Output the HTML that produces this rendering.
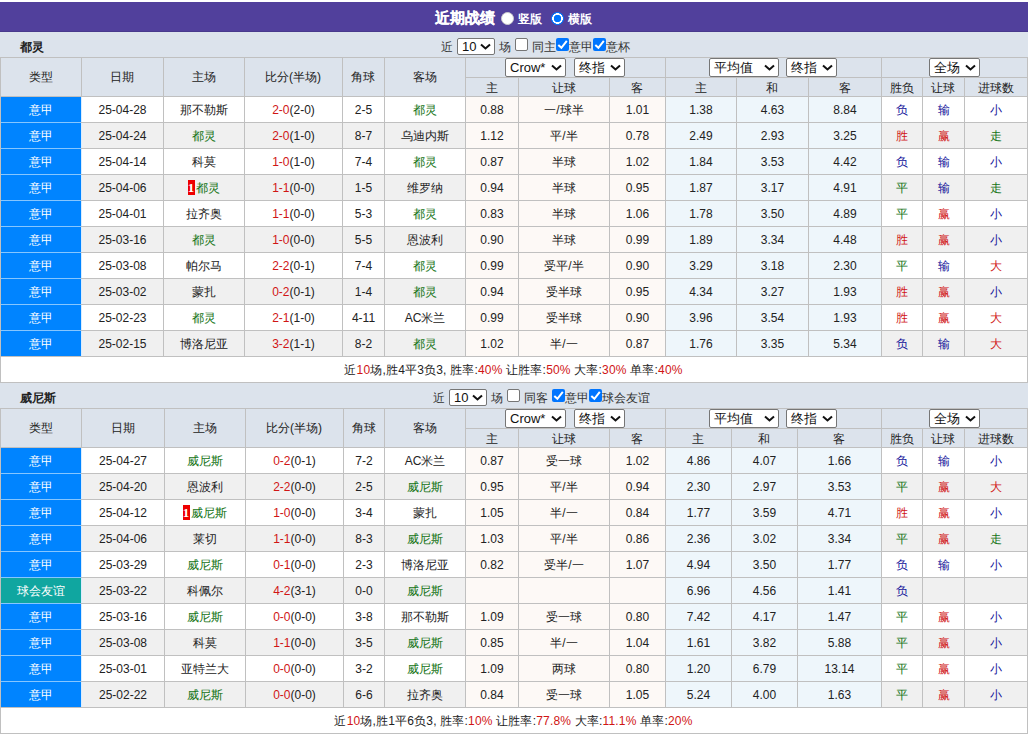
<!DOCTYPE html><html><head><meta charset="utf-8"><style>
html,body{margin:0;padding:0;background:#fff;}
body{width:1029px;height:735px;overflow:hidden;position:relative;font-family:"Liberation Sans", sans-serif;font-size:12px;color:#222;}
.a{position:absolute;}
.t{text-align:center;white-space:nowrap;}
.ct{white-space:nowrap;color:#333;}
.sel{background:#fff;border:1px solid #767676;border-radius:2px;}
.st{white-space:nowrap;font-size:13px;color:#111;}
.cbx{width:11px;height:11px;border:1px solid #767676;border-radius:2px;background:#fff;}
.cbx.on{width:13px;height:13px;border:none;background:#0075ff;}
.bar{left:0;top:2px;width:1028px;height:29px;background:#51409c;border-bottom:1px solid #48398c;}
.radio{width:11px;height:11px;border-radius:50%;background:#fff;border:1px solid #ccc;}
.radio.on{width:13px;height:13px;border:none;background:radial-gradient(circle at center,#0075ff 0,#0075ff 3.5px,#fff 3.9px,#fff 5.1px,#0075ff 5.5px);}
.rf{display:inline-block;background:#e00;color:#fff;font-weight:bold;width:7px;height:15px;line-height:15px;vertical-align:middle;margin-top:-3px;margin-left:-1px;margin-right:1px;font-family:"Liberation Serif",serif;font-size:13px}
</style></head><body>
<div class="a bar"></div>
<div class="a" style="left:0;top:32px;width:1028px;height:1px;background:#e6e6fc"></div>
<div class="a" style="left:435px;top:3px;height:29px;line-height:29px;color:#fff;font-weight:bold;font-size:15px;-webkit-text-stroke:0.2px #fff">近期战绩</div>
<div class="a radio" style="left:501px;top:12px"></div>
<div class="a" style="left:518px;top:5px;height:29px;line-height:29px;color:#fff;font-size:12px;font-weight:bold">竖版</div>
<div class="a radio on" style="left:551px;top:12px"></div>
<div class="a" style="left:568px;top:5px;height:29px;line-height:29px;color:#fff;font-size:12px;font-weight:bold">横版</div>
<div class="a" style="left:0px;top:32px;width:1028px;height:25px;background:#dce3ec;"></div>
<div class="a t" style="left:20px;top:35px;width:100px;height:25px;line-height:25px;text-align:left;font-weight:bold;color:#222">都灵</div>
<div class="a ct" style="left:441px;top:35px;height:25px;line-height:25px;">近</div>
<div class="a sel" style="left:457px;top:38px;width:36px;height:15px;"></div>
<div class="a st" style="left:462px;top:38px;height:17px;line-height:17px;">10</div>
<svg class="a" style="left:480px;top:43px" width="11" height="8" viewBox="0 0 11 8"><path d="M1 1.5 L5.5 5.5 L10 1.5" fill="none" stroke="#111" stroke-width="2"/></svg>
<div class="a ct" style="left:499px;top:35px;height:25px;line-height:25px;">场</div>
<div class="a cbx" style="left:515px;top:38px;"></div>
<div class="a ct" style="left:532px;top:35px;height:25px;line-height:25px;">同主</div>
<div class="a cbx on" style="left:556px;top:38px;"></div>
<svg class="a" style="left:556px;top:38px" width="13" height="13" viewBox="0 0 13 13"><path d="M2.3 6.9 L5.4 9.8 L10.8 2.8" fill="none" stroke="#fff" stroke-width="2"/></svg>
<div class="a ct" style="left:569px;top:35px;height:25px;line-height:25px;">意甲</div>
<div class="a cbx on" style="left:593px;top:38px;"></div>
<svg class="a" style="left:593px;top:38px" width="13" height="13" viewBox="0 0 13 13"><path d="M2.3 6.9 L5.4 9.8 L10.8 2.8" fill="none" stroke="#fff" stroke-width="2"/></svg>
<div class="a ct" style="left:606px;top:35px;height:25px;line-height:25px;">意杯</div>
<div class="a" style="left:0px;top:57px;width:1028px;height:39px;background:#dce3ec;"></div>
<div class="a" style="left:0px;top:96px;width:81px;height:26px;background:#0084ff;"></div>
<div class="a" style="left:81px;top:96px;width:384px;height:26px;background:#fff;"></div>
<div class="a" style="left:465px;top:96px;width:200px;height:26px;background:#fdf9f6;"></div>
<div class="a" style="left:665px;top:96px;width:216px;height:26px;background:#eef6fb;"></div>
<div class="a" style="left:881px;top:96px;width:146px;height:26px;background:#fff;"></div>
<div class="a" style="left:0px;top:122px;width:81px;height:26px;background:#0084ff;"></div>
<div class="a" style="left:81px;top:122px;width:384px;height:26px;background:#f0f0f0;"></div>
<div class="a" style="left:465px;top:122px;width:200px;height:26px;background:#fdf9f6;"></div>
<div class="a" style="left:665px;top:122px;width:216px;height:26px;background:#eef6fb;"></div>
<div class="a" style="left:881px;top:122px;width:146px;height:26px;background:#f0f0f0;"></div>
<div class="a" style="left:0px;top:148px;width:81px;height:26px;background:#0084ff;"></div>
<div class="a" style="left:81px;top:148px;width:384px;height:26px;background:#fff;"></div>
<div class="a" style="left:465px;top:148px;width:200px;height:26px;background:#fdf9f6;"></div>
<div class="a" style="left:665px;top:148px;width:216px;height:26px;background:#eef6fb;"></div>
<div class="a" style="left:881px;top:148px;width:146px;height:26px;background:#fff;"></div>
<div class="a" style="left:0px;top:174px;width:81px;height:26px;background:#0084ff;"></div>
<div class="a" style="left:81px;top:174px;width:384px;height:26px;background:#f0f0f0;"></div>
<div class="a" style="left:465px;top:174px;width:200px;height:26px;background:#fdf9f6;"></div>
<div class="a" style="left:665px;top:174px;width:216px;height:26px;background:#eef6fb;"></div>
<div class="a" style="left:881px;top:174px;width:146px;height:26px;background:#f0f0f0;"></div>
<div class="a" style="left:0px;top:200px;width:81px;height:26px;background:#0084ff;"></div>
<div class="a" style="left:81px;top:200px;width:384px;height:26px;background:#fff;"></div>
<div class="a" style="left:465px;top:200px;width:200px;height:26px;background:#fdf9f6;"></div>
<div class="a" style="left:665px;top:200px;width:216px;height:26px;background:#eef6fb;"></div>
<div class="a" style="left:881px;top:200px;width:146px;height:26px;background:#fff;"></div>
<div class="a" style="left:0px;top:226px;width:81px;height:26px;background:#0084ff;"></div>
<div class="a" style="left:81px;top:226px;width:384px;height:26px;background:#f0f0f0;"></div>
<div class="a" style="left:465px;top:226px;width:200px;height:26px;background:#fdf9f6;"></div>
<div class="a" style="left:665px;top:226px;width:216px;height:26px;background:#eef6fb;"></div>
<div class="a" style="left:881px;top:226px;width:146px;height:26px;background:#f0f0f0;"></div>
<div class="a" style="left:0px;top:252px;width:81px;height:26px;background:#0084ff;"></div>
<div class="a" style="left:81px;top:252px;width:384px;height:26px;background:#fff;"></div>
<div class="a" style="left:465px;top:252px;width:200px;height:26px;background:#fdf9f6;"></div>
<div class="a" style="left:665px;top:252px;width:216px;height:26px;background:#eef6fb;"></div>
<div class="a" style="left:881px;top:252px;width:146px;height:26px;background:#fff;"></div>
<div class="a" style="left:0px;top:278px;width:81px;height:26px;background:#0084ff;"></div>
<div class="a" style="left:81px;top:278px;width:384px;height:26px;background:#f0f0f0;"></div>
<div class="a" style="left:465px;top:278px;width:200px;height:26px;background:#fdf9f6;"></div>
<div class="a" style="left:665px;top:278px;width:216px;height:26px;background:#eef6fb;"></div>
<div class="a" style="left:881px;top:278px;width:146px;height:26px;background:#f0f0f0;"></div>
<div class="a" style="left:0px;top:304px;width:81px;height:26px;background:#0084ff;"></div>
<div class="a" style="left:81px;top:304px;width:384px;height:26px;background:#fff;"></div>
<div class="a" style="left:465px;top:304px;width:200px;height:26px;background:#fdf9f6;"></div>
<div class="a" style="left:665px;top:304px;width:216px;height:26px;background:#eef6fb;"></div>
<div class="a" style="left:881px;top:304px;width:146px;height:26px;background:#fff;"></div>
<div class="a" style="left:0px;top:330px;width:81px;height:26px;background:#0084ff;"></div>
<div class="a" style="left:81px;top:330px;width:384px;height:26px;background:#f0f0f0;"></div>
<div class="a" style="left:465px;top:330px;width:200px;height:26px;background:#fdf9f6;"></div>
<div class="a" style="left:665px;top:330px;width:216px;height:26px;background:#eef6fb;"></div>
<div class="a" style="left:881px;top:330px;width:146px;height:26px;background:#f0f0f0;"></div>
<div class="a" style="left:0px;top:356px;width:1028px;height:26px;background:#fff;"></div>
<div class="a" style="left:0px;top:57px;width:1028px;height:1px;background:#c0c0c0;"></div>
<div class="a" style="left:465px;top:77px;width:562px;height:1px;background:#c0c0c0;"></div>
<div class="a" style="left:0px;top:96px;width:1028px;height:1px;background:#c0c0c0;"></div>
<div class="a" style="left:0px;top:122px;width:1028px;height:1px;background:#c0c0c0;"></div>
<div class="a" style="left:0px;top:148px;width:1028px;height:1px;background:#c0c0c0;"></div>
<div class="a" style="left:0px;top:174px;width:1028px;height:1px;background:#c0c0c0;"></div>
<div class="a" style="left:0px;top:200px;width:1028px;height:1px;background:#c0c0c0;"></div>
<div class="a" style="left:0px;top:226px;width:1028px;height:1px;background:#c0c0c0;"></div>
<div class="a" style="left:0px;top:252px;width:1028px;height:1px;background:#c0c0c0;"></div>
<div class="a" style="left:0px;top:278px;width:1028px;height:1px;background:#c0c0c0;"></div>
<div class="a" style="left:0px;top:304px;width:1028px;height:1px;background:#c0c0c0;"></div>
<div class="a" style="left:0px;top:330px;width:1028px;height:1px;background:#c0c0c0;"></div>
<div class="a" style="left:0px;top:356px;width:1028px;height:1px;background:#c0c0c0;"></div>
<div class="a" style="left:0px;top:382px;width:1028px;height:1px;background:#c0c0c0;"></div>
<div class="a" style="left:0px;top:57px;width:1px;height:326px;background:#c0c0c0;"></div>
<div class="a" style="left:81px;top:57px;width:1px;height:300px;background:#c0c0c0;"></div>
<div class="a" style="left:163px;top:57px;width:1px;height:300px;background:#c0c0c0;"></div>
<div class="a" style="left:244px;top:57px;width:1px;height:300px;background:#c0c0c0;"></div>
<div class="a" style="left:342px;top:57px;width:1px;height:300px;background:#c0c0c0;"></div>
<div class="a" style="left:384px;top:57px;width:1px;height:300px;background:#c0c0c0;"></div>
<div class="a" style="left:465px;top:57px;width:1px;height:300px;background:#c0c0c0;"></div>
<div class="a" style="left:518px;top:77px;width:1px;height:280px;background:#c0c0c0;"></div>
<div class="a" style="left:609px;top:77px;width:1px;height:280px;background:#c0c0c0;"></div>
<div class="a" style="left:665px;top:57px;width:1px;height:300px;background:#c0c0c0;"></div>
<div class="a" style="left:736px;top:77px;width:1px;height:280px;background:#c0c0c0;"></div>
<div class="a" style="left:808px;top:77px;width:1px;height:280px;background:#c0c0c0;"></div>
<div class="a" style="left:881px;top:57px;width:1px;height:300px;background:#c0c0c0;"></div>
<div class="a" style="left:922px;top:77px;width:1px;height:280px;background:#c0c0c0;"></div>
<div class="a" style="left:964px;top:77px;width:1px;height:280px;background:#c0c0c0;"></div>
<div class="a" style="left:1027px;top:57px;width:1px;height:326px;background:#c0c0c0;"></div>
<div class="a" style="left:1px;top:122px;width:80px;height:1px;background:#86c6ff;"></div>
<div class="a" style="left:1px;top:148px;width:80px;height:1px;background:#86c6ff;"></div>
<div class="a" style="left:1px;top:174px;width:80px;height:1px;background:#86c6ff;"></div>
<div class="a" style="left:1px;top:200px;width:80px;height:1px;background:#86c6ff;"></div>
<div class="a" style="left:1px;top:226px;width:80px;height:1px;background:#86c6ff;"></div>
<div class="a" style="left:1px;top:252px;width:80px;height:1px;background:#86c6ff;"></div>
<div class="a" style="left:1px;top:278px;width:80px;height:1px;background:#86c6ff;"></div>
<div class="a" style="left:1px;top:304px;width:80px;height:1px;background:#86c6ff;"></div>
<div class="a" style="left:1px;top:330px;width:80px;height:1px;background:#86c6ff;"></div>
<div class="a" style="left:81px;top:97px;width:1px;height:25px;background:#d9ecff;"></div>
<div class="a" style="left:81px;top:123px;width:1px;height:25px;background:#d9ecff;"></div>
<div class="a" style="left:81px;top:149px;width:1px;height:25px;background:#d9ecff;"></div>
<div class="a" style="left:81px;top:175px;width:1px;height:25px;background:#d9ecff;"></div>
<div class="a" style="left:81px;top:201px;width:1px;height:25px;background:#d9ecff;"></div>
<div class="a" style="left:81px;top:227px;width:1px;height:25px;background:#d9ecff;"></div>
<div class="a" style="left:81px;top:253px;width:1px;height:25px;background:#d9ecff;"></div>
<div class="a" style="left:81px;top:279px;width:1px;height:25px;background:#d9ecff;"></div>
<div class="a" style="left:81px;top:305px;width:1px;height:25px;background:#d9ecff;"></div>
<div class="a" style="left:81px;top:331px;width:1px;height:25px;background:#d9ecff;"></div>
<div class="a t" style="left:0px;top:58px;width:81px;height:39px;line-height:39px;color:#222">类型</div>
<div class="a t" style="left:81px;top:58px;width:82px;height:39px;line-height:39px;color:#222">日期</div>
<div class="a t" style="left:163px;top:58px;width:81px;height:39px;line-height:39px;color:#222">主场</div>
<div class="a t" style="left:244px;top:58px;width:98px;height:39px;line-height:39px;color:#222">比分(半场)</div>
<div class="a t" style="left:342px;top:58px;width:42px;height:39px;line-height:39px;color:#222">角球</div>
<div class="a t" style="left:384px;top:58px;width:81px;height:39px;line-height:39px;color:#222">客场</div>
<div class="a t" style="left:465px;top:79px;width:53px;height:19px;line-height:19px;color:#222">主</div>
<div class="a t" style="left:518px;top:79px;width:91px;height:19px;line-height:19px;color:#222">让球</div>
<div class="a t" style="left:609px;top:79px;width:56px;height:19px;line-height:19px;color:#222">客</div>
<div class="a t" style="left:665px;top:79px;width:71px;height:19px;line-height:19px;color:#222">主</div>
<div class="a t" style="left:736px;top:79px;width:72px;height:19px;line-height:19px;color:#222">和</div>
<div class="a t" style="left:808px;top:79px;width:73px;height:19px;line-height:19px;color:#222">客</div>
<div class="a t" style="left:881px;top:79px;width:41px;height:19px;line-height:19px;color:#222">胜负</div>
<div class="a t" style="left:922px;top:79px;width:42px;height:19px;line-height:19px;color:#222">让球</div>
<div class="a t" style="left:964px;top:79px;width:63px;height:19px;line-height:19px;color:#222">进球数</div>
<div class="a sel" style="left:505px;top:58px;width:59px;height:17px;"></div>
<div class="a st" style="left:510px;top:58px;height:19px;line-height:19px;">Crow*</div>
<svg class="a" style="left:551px;top:64px" width="11" height="8" viewBox="0 0 11 8"><path d="M1 1.5 L5.5 5.5 L10 1.5" fill="none" stroke="#111" stroke-width="2"/></svg>
<div class="a sel" style="left:574px;top:58px;width:49px;height:17px;"></div>
<div class="a st" style="left:579px;top:58px;height:19px;line-height:19px;">终指</div>
<svg class="a" style="left:610px;top:64px" width="11" height="8" viewBox="0 0 11 8"><path d="M1 1.5 L5.5 5.5 L10 1.5" fill="none" stroke="#111" stroke-width="2"/></svg>
<div class="a sel" style="left:709px;top:58px;width:68px;height:17px;"></div>
<div class="a st" style="left:714px;top:58px;height:19px;line-height:19px;">平均值</div>
<svg class="a" style="left:764px;top:64px" width="11" height="8" viewBox="0 0 11 8"><path d="M1 1.5 L5.5 5.5 L10 1.5" fill="none" stroke="#111" stroke-width="2"/></svg>
<div class="a sel" style="left:786px;top:58px;width:49px;height:17px;"></div>
<div class="a st" style="left:791px;top:58px;height:19px;line-height:19px;">终指</div>
<svg class="a" style="left:822px;top:64px" width="11" height="8" viewBox="0 0 11 8"><path d="M1 1.5 L5.5 5.5 L10 1.5" fill="none" stroke="#111" stroke-width="2"/></svg>
<div class="a sel" style="left:929px;top:58px;width:49px;height:17px;"></div>
<div class="a st" style="left:934px;top:58px;height:19px;line-height:19px;">全场</div>
<svg class="a" style="left:965px;top:64px" width="11" height="8" viewBox="0 0 11 8"><path d="M1 1.5 L5.5 5.5 L10 1.5" fill="none" stroke="#111" stroke-width="2"/></svg>
<div class="a t" style="left:1px;top:98px;width:80px;height:25px;line-height:25px;color:#fff">意甲</div>
<div class="a t" style="left:82px;top:98px;width:81px;height:25px;line-height:25px;color:#222">25-04-28</div>
<div class="a t" style="left:164px;top:98px;width:80px;height:25px;line-height:25px;color:#222">那不勒斯</div>
<div class="a t" style="left:245px;top:98px;width:97px;height:25px;line-height:25px;color:#222"><span style="color:#d01515">2-0</span>(2-0)</div>
<div class="a t" style="left:343px;top:98px;width:41px;height:25px;line-height:25px;color:#222">2-5</div>
<div class="a t" style="left:385px;top:98px;width:80px;height:25px;line-height:25px;color:#222"><span style="color:#137313">都灵</span></div>
<div class="a t" style="left:466px;top:98px;width:52px;height:25px;line-height:25px;color:#222">0.88</div>
<div class="a t" style="left:519px;top:98px;width:90px;height:25px;line-height:25px;color:#222">一/球半</div>
<div class="a t" style="left:610px;top:98px;width:55px;height:25px;line-height:25px;color:#222">1.01</div>
<div class="a t" style="left:666px;top:98px;width:70px;height:25px;line-height:25px;color:#222">1.38</div>
<div class="a t" style="left:737px;top:98px;width:71px;height:25px;line-height:25px;color:#222">4.63</div>
<div class="a t" style="left:809px;top:98px;width:72px;height:25px;line-height:25px;color:#222">8.84</div>
<div class="a t" style="left:882px;top:98px;width:40px;height:25px;line-height:25px;color:#222"><span style="color:#12129a">负</span></div>
<div class="a t" style="left:923px;top:98px;width:41px;height:25px;line-height:25px;color:#222"><span style="color:#12129a">输</span></div>
<div class="a t" style="left:965px;top:98px;width:62px;height:25px;line-height:25px;color:#222"><span style="color:#12129a">小</span></div>
<div class="a t" style="left:1px;top:124px;width:80px;height:25px;line-height:25px;color:#fff">意甲</div>
<div class="a t" style="left:82px;top:124px;width:81px;height:25px;line-height:25px;color:#222">25-04-24</div>
<div class="a t" style="left:164px;top:124px;width:80px;height:25px;line-height:25px;color:#222"><span style="color:#137313">都灵</span></div>
<div class="a t" style="left:245px;top:124px;width:97px;height:25px;line-height:25px;color:#222"><span style="color:#d01515">2-0</span>(1-0)</div>
<div class="a t" style="left:343px;top:124px;width:41px;height:25px;line-height:25px;color:#222">8-7</div>
<div class="a t" style="left:385px;top:124px;width:80px;height:25px;line-height:25px;color:#222">乌迪内斯</div>
<div class="a t" style="left:466px;top:124px;width:52px;height:25px;line-height:25px;color:#222">1.12</div>
<div class="a t" style="left:519px;top:124px;width:90px;height:25px;line-height:25px;color:#222">平/半</div>
<div class="a t" style="left:610px;top:124px;width:55px;height:25px;line-height:25px;color:#222">0.78</div>
<div class="a t" style="left:666px;top:124px;width:70px;height:25px;line-height:25px;color:#222">2.49</div>
<div class="a t" style="left:737px;top:124px;width:71px;height:25px;line-height:25px;color:#222">2.93</div>
<div class="a t" style="left:809px;top:124px;width:72px;height:25px;line-height:25px;color:#222">3.25</div>
<div class="a t" style="left:882px;top:124px;width:40px;height:25px;line-height:25px;color:#222"><span style="color:#d01515">胜</span></div>
<div class="a t" style="left:923px;top:124px;width:41px;height:25px;line-height:25px;color:#222"><span style="color:#d01515">赢</span></div>
<div class="a t" style="left:965px;top:124px;width:62px;height:25px;line-height:25px;color:#222"><span style="color:#137313">走</span></div>
<div class="a t" style="left:1px;top:150px;width:80px;height:25px;line-height:25px;color:#fff">意甲</div>
<div class="a t" style="left:82px;top:150px;width:81px;height:25px;line-height:25px;color:#222">25-04-14</div>
<div class="a t" style="left:164px;top:150px;width:80px;height:25px;line-height:25px;color:#222">科莫</div>
<div class="a t" style="left:245px;top:150px;width:97px;height:25px;line-height:25px;color:#222"><span style="color:#d01515">1-0</span>(1-0)</div>
<div class="a t" style="left:343px;top:150px;width:41px;height:25px;line-height:25px;color:#222">7-4</div>
<div class="a t" style="left:385px;top:150px;width:80px;height:25px;line-height:25px;color:#222"><span style="color:#137313">都灵</span></div>
<div class="a t" style="left:466px;top:150px;width:52px;height:25px;line-height:25px;color:#222">0.87</div>
<div class="a t" style="left:519px;top:150px;width:90px;height:25px;line-height:25px;color:#222">半球</div>
<div class="a t" style="left:610px;top:150px;width:55px;height:25px;line-height:25px;color:#222">1.02</div>
<div class="a t" style="left:666px;top:150px;width:70px;height:25px;line-height:25px;color:#222">1.84</div>
<div class="a t" style="left:737px;top:150px;width:71px;height:25px;line-height:25px;color:#222">3.53</div>
<div class="a t" style="left:809px;top:150px;width:72px;height:25px;line-height:25px;color:#222">4.42</div>
<div class="a t" style="left:882px;top:150px;width:40px;height:25px;line-height:25px;color:#222"><span style="color:#12129a">负</span></div>
<div class="a t" style="left:923px;top:150px;width:41px;height:25px;line-height:25px;color:#222"><span style="color:#12129a">输</span></div>
<div class="a t" style="left:965px;top:150px;width:62px;height:25px;line-height:25px;color:#222"><span style="color:#12129a">小</span></div>
<div class="a t" style="left:1px;top:176px;width:80px;height:25px;line-height:25px;color:#fff">意甲</div>
<div class="a t" style="left:82px;top:176px;width:81px;height:25px;line-height:25px;color:#222">25-04-06</div>
<div class="a t" style="left:164px;top:176px;width:80px;height:25px;line-height:25px;color:#222"><span class="rf">1</span><span style="color:#137313">都灵</span></div>
<div class="a t" style="left:245px;top:176px;width:97px;height:25px;line-height:25px;color:#222"><span style="color:#d01515">1-1</span>(0-0)</div>
<div class="a t" style="left:343px;top:176px;width:41px;height:25px;line-height:25px;color:#222">1-5</div>
<div class="a t" style="left:385px;top:176px;width:80px;height:25px;line-height:25px;color:#222">维罗纳</div>
<div class="a t" style="left:466px;top:176px;width:52px;height:25px;line-height:25px;color:#222">0.94</div>
<div class="a t" style="left:519px;top:176px;width:90px;height:25px;line-height:25px;color:#222">半球</div>
<div class="a t" style="left:610px;top:176px;width:55px;height:25px;line-height:25px;color:#222">0.95</div>
<div class="a t" style="left:666px;top:176px;width:70px;height:25px;line-height:25px;color:#222">1.87</div>
<div class="a t" style="left:737px;top:176px;width:71px;height:25px;line-height:25px;color:#222">3.17</div>
<div class="a t" style="left:809px;top:176px;width:72px;height:25px;line-height:25px;color:#222">4.91</div>
<div class="a t" style="left:882px;top:176px;width:40px;height:25px;line-height:25px;color:#222"><span style="color:#137313">平</span></div>
<div class="a t" style="left:923px;top:176px;width:41px;height:25px;line-height:25px;color:#222"><span style="color:#12129a">输</span></div>
<div class="a t" style="left:965px;top:176px;width:62px;height:25px;line-height:25px;color:#222"><span style="color:#137313">走</span></div>
<div class="a t" style="left:1px;top:202px;width:80px;height:25px;line-height:25px;color:#fff">意甲</div>
<div class="a t" style="left:82px;top:202px;width:81px;height:25px;line-height:25px;color:#222">25-04-01</div>
<div class="a t" style="left:164px;top:202px;width:80px;height:25px;line-height:25px;color:#222">拉齐奥</div>
<div class="a t" style="left:245px;top:202px;width:97px;height:25px;line-height:25px;color:#222"><span style="color:#d01515">1-1</span>(0-0)</div>
<div class="a t" style="left:343px;top:202px;width:41px;height:25px;line-height:25px;color:#222">5-3</div>
<div class="a t" style="left:385px;top:202px;width:80px;height:25px;line-height:25px;color:#222"><span style="color:#137313">都灵</span></div>
<div class="a t" style="left:466px;top:202px;width:52px;height:25px;line-height:25px;color:#222">0.83</div>
<div class="a t" style="left:519px;top:202px;width:90px;height:25px;line-height:25px;color:#222">半球</div>
<div class="a t" style="left:610px;top:202px;width:55px;height:25px;line-height:25px;color:#222">1.06</div>
<div class="a t" style="left:666px;top:202px;width:70px;height:25px;line-height:25px;color:#222">1.78</div>
<div class="a t" style="left:737px;top:202px;width:71px;height:25px;line-height:25px;color:#222">3.50</div>
<div class="a t" style="left:809px;top:202px;width:72px;height:25px;line-height:25px;color:#222">4.89</div>
<div class="a t" style="left:882px;top:202px;width:40px;height:25px;line-height:25px;color:#222"><span style="color:#137313">平</span></div>
<div class="a t" style="left:923px;top:202px;width:41px;height:25px;line-height:25px;color:#222"><span style="color:#d01515">赢</span></div>
<div class="a t" style="left:965px;top:202px;width:62px;height:25px;line-height:25px;color:#222"><span style="color:#12129a">小</span></div>
<div class="a t" style="left:1px;top:228px;width:80px;height:25px;line-height:25px;color:#fff">意甲</div>
<div class="a t" style="left:82px;top:228px;width:81px;height:25px;line-height:25px;color:#222">25-03-16</div>
<div class="a t" style="left:164px;top:228px;width:80px;height:25px;line-height:25px;color:#222"><span style="color:#137313">都灵</span></div>
<div class="a t" style="left:245px;top:228px;width:97px;height:25px;line-height:25px;color:#222"><span style="color:#d01515">1-0</span>(0-0)</div>
<div class="a t" style="left:343px;top:228px;width:41px;height:25px;line-height:25px;color:#222">5-5</div>
<div class="a t" style="left:385px;top:228px;width:80px;height:25px;line-height:25px;color:#222">恩波利</div>
<div class="a t" style="left:466px;top:228px;width:52px;height:25px;line-height:25px;color:#222">0.90</div>
<div class="a t" style="left:519px;top:228px;width:90px;height:25px;line-height:25px;color:#222">半球</div>
<div class="a t" style="left:610px;top:228px;width:55px;height:25px;line-height:25px;color:#222">0.99</div>
<div class="a t" style="left:666px;top:228px;width:70px;height:25px;line-height:25px;color:#222">1.89</div>
<div class="a t" style="left:737px;top:228px;width:71px;height:25px;line-height:25px;color:#222">3.34</div>
<div class="a t" style="left:809px;top:228px;width:72px;height:25px;line-height:25px;color:#222">4.48</div>
<div class="a t" style="left:882px;top:228px;width:40px;height:25px;line-height:25px;color:#222"><span style="color:#d01515">胜</span></div>
<div class="a t" style="left:923px;top:228px;width:41px;height:25px;line-height:25px;color:#222"><span style="color:#d01515">赢</span></div>
<div class="a t" style="left:965px;top:228px;width:62px;height:25px;line-height:25px;color:#222"><span style="color:#12129a">小</span></div>
<div class="a t" style="left:1px;top:254px;width:80px;height:25px;line-height:25px;color:#fff">意甲</div>
<div class="a t" style="left:82px;top:254px;width:81px;height:25px;line-height:25px;color:#222">25-03-08</div>
<div class="a t" style="left:164px;top:254px;width:80px;height:25px;line-height:25px;color:#222">帕尔马</div>
<div class="a t" style="left:245px;top:254px;width:97px;height:25px;line-height:25px;color:#222"><span style="color:#d01515">2-2</span>(0-1)</div>
<div class="a t" style="left:343px;top:254px;width:41px;height:25px;line-height:25px;color:#222">7-4</div>
<div class="a t" style="left:385px;top:254px;width:80px;height:25px;line-height:25px;color:#222"><span style="color:#137313">都灵</span></div>
<div class="a t" style="left:466px;top:254px;width:52px;height:25px;line-height:25px;color:#222">0.99</div>
<div class="a t" style="left:519px;top:254px;width:90px;height:25px;line-height:25px;color:#222">受平/半</div>
<div class="a t" style="left:610px;top:254px;width:55px;height:25px;line-height:25px;color:#222">0.90</div>
<div class="a t" style="left:666px;top:254px;width:70px;height:25px;line-height:25px;color:#222">3.29</div>
<div class="a t" style="left:737px;top:254px;width:71px;height:25px;line-height:25px;color:#222">3.18</div>
<div class="a t" style="left:809px;top:254px;width:72px;height:25px;line-height:25px;color:#222">2.30</div>
<div class="a t" style="left:882px;top:254px;width:40px;height:25px;line-height:25px;color:#222"><span style="color:#137313">平</span></div>
<div class="a t" style="left:923px;top:254px;width:41px;height:25px;line-height:25px;color:#222"><span style="color:#12129a">输</span></div>
<div class="a t" style="left:965px;top:254px;width:62px;height:25px;line-height:25px;color:#222"><span style="color:#d01515">大</span></div>
<div class="a t" style="left:1px;top:280px;width:80px;height:25px;line-height:25px;color:#fff">意甲</div>
<div class="a t" style="left:82px;top:280px;width:81px;height:25px;line-height:25px;color:#222">25-03-02</div>
<div class="a t" style="left:164px;top:280px;width:80px;height:25px;line-height:25px;color:#222">蒙扎</div>
<div class="a t" style="left:245px;top:280px;width:97px;height:25px;line-height:25px;color:#222"><span style="color:#d01515">0-2</span>(0-1)</div>
<div class="a t" style="left:343px;top:280px;width:41px;height:25px;line-height:25px;color:#222">1-4</div>
<div class="a t" style="left:385px;top:280px;width:80px;height:25px;line-height:25px;color:#222"><span style="color:#137313">都灵</span></div>
<div class="a t" style="left:466px;top:280px;width:52px;height:25px;line-height:25px;color:#222">0.94</div>
<div class="a t" style="left:519px;top:280px;width:90px;height:25px;line-height:25px;color:#222">受半球</div>
<div class="a t" style="left:610px;top:280px;width:55px;height:25px;line-height:25px;color:#222">0.95</div>
<div class="a t" style="left:666px;top:280px;width:70px;height:25px;line-height:25px;color:#222">4.34</div>
<div class="a t" style="left:737px;top:280px;width:71px;height:25px;line-height:25px;color:#222">3.27</div>
<div class="a t" style="left:809px;top:280px;width:72px;height:25px;line-height:25px;color:#222">1.93</div>
<div class="a t" style="left:882px;top:280px;width:40px;height:25px;line-height:25px;color:#222"><span style="color:#d01515">胜</span></div>
<div class="a t" style="left:923px;top:280px;width:41px;height:25px;line-height:25px;color:#222"><span style="color:#d01515">赢</span></div>
<div class="a t" style="left:965px;top:280px;width:62px;height:25px;line-height:25px;color:#222"><span style="color:#12129a">小</span></div>
<div class="a t" style="left:1px;top:306px;width:80px;height:25px;line-height:25px;color:#fff">意甲</div>
<div class="a t" style="left:82px;top:306px;width:81px;height:25px;line-height:25px;color:#222">25-02-23</div>
<div class="a t" style="left:164px;top:306px;width:80px;height:25px;line-height:25px;color:#222"><span style="color:#137313">都灵</span></div>
<div class="a t" style="left:245px;top:306px;width:97px;height:25px;line-height:25px;color:#222"><span style="color:#d01515">2-1</span>(1-0)</div>
<div class="a t" style="left:343px;top:306px;width:41px;height:25px;line-height:25px;color:#222">4-11</div>
<div class="a t" style="left:385px;top:306px;width:80px;height:25px;line-height:25px;color:#222">AC米兰</div>
<div class="a t" style="left:466px;top:306px;width:52px;height:25px;line-height:25px;color:#222">0.99</div>
<div class="a t" style="left:519px;top:306px;width:90px;height:25px;line-height:25px;color:#222">受半球</div>
<div class="a t" style="left:610px;top:306px;width:55px;height:25px;line-height:25px;color:#222">0.90</div>
<div class="a t" style="left:666px;top:306px;width:70px;height:25px;line-height:25px;color:#222">3.96</div>
<div class="a t" style="left:737px;top:306px;width:71px;height:25px;line-height:25px;color:#222">3.54</div>
<div class="a t" style="left:809px;top:306px;width:72px;height:25px;line-height:25px;color:#222">1.93</div>
<div class="a t" style="left:882px;top:306px;width:40px;height:25px;line-height:25px;color:#222"><span style="color:#d01515">胜</span></div>
<div class="a t" style="left:923px;top:306px;width:41px;height:25px;line-height:25px;color:#222"><span style="color:#d01515">赢</span></div>
<div class="a t" style="left:965px;top:306px;width:62px;height:25px;line-height:25px;color:#222"><span style="color:#d01515">大</span></div>
<div class="a t" style="left:1px;top:332px;width:80px;height:25px;line-height:25px;color:#fff">意甲</div>
<div class="a t" style="left:82px;top:332px;width:81px;height:25px;line-height:25px;color:#222">25-02-15</div>
<div class="a t" style="left:164px;top:332px;width:80px;height:25px;line-height:25px;color:#222">博洛尼亚</div>
<div class="a t" style="left:245px;top:332px;width:97px;height:25px;line-height:25px;color:#222"><span style="color:#d01515">3-2</span>(1-1)</div>
<div class="a t" style="left:343px;top:332px;width:41px;height:25px;line-height:25px;color:#222">8-2</div>
<div class="a t" style="left:385px;top:332px;width:80px;height:25px;line-height:25px;color:#222"><span style="color:#137313">都灵</span></div>
<div class="a t" style="left:466px;top:332px;width:52px;height:25px;line-height:25px;color:#222">1.02</div>
<div class="a t" style="left:519px;top:332px;width:90px;height:25px;line-height:25px;color:#222">半/一</div>
<div class="a t" style="left:610px;top:332px;width:55px;height:25px;line-height:25px;color:#222">0.87</div>
<div class="a t" style="left:666px;top:332px;width:70px;height:25px;line-height:25px;color:#222">1.76</div>
<div class="a t" style="left:737px;top:332px;width:71px;height:25px;line-height:25px;color:#222">3.35</div>
<div class="a t" style="left:809px;top:332px;width:72px;height:25px;line-height:25px;color:#222">5.34</div>
<div class="a t" style="left:882px;top:332px;width:40px;height:25px;line-height:25px;color:#222"><span style="color:#12129a">负</span></div>
<div class="a t" style="left:923px;top:332px;width:41px;height:25px;line-height:25px;color:#222"><span style="color:#12129a">输</span></div>
<div class="a t" style="left:965px;top:332px;width:62px;height:25px;line-height:25px;color:#222"><span style="color:#d01515">大</span></div>
<div class="a t" style="left:0px;top:358px;width:1027px;height:25px;line-height:25px;color:#222;letter-spacing:0.18px">近<span style="color:#d01515">10</span>场,胜4平3负3, 胜率:<span style="color:#d01515">40%</span> 让胜率:<span style="color:#d01515">50%</span> 大率:<span style="color:#d01515">30%</span> 单率:<span style="color:#d01515">40%</span></div>
<div class="a" style="left:0px;top:383px;width:1028px;height:25px;background:#dce3ec;"></div>
<div class="a t" style="left:20px;top:386px;width:100px;height:25px;line-height:25px;text-align:left;font-weight:bold;color:#222">威尼斯</div>
<div class="a ct" style="left:433px;top:386px;height:25px;line-height:25px;">近</div>
<div class="a sel" style="left:449px;top:389px;width:36px;height:15px;"></div>
<div class="a st" style="left:454px;top:389px;height:17px;line-height:17px;">10</div>
<svg class="a" style="left:472px;top:394px" width="11" height="8" viewBox="0 0 11 8"><path d="M1 1.5 L5.5 5.5 L10 1.5" fill="none" stroke="#111" stroke-width="2"/></svg>
<div class="a ct" style="left:491px;top:386px;height:25px;line-height:25px;">场</div>
<div class="a cbx" style="left:507px;top:389px;"></div>
<div class="a ct" style="left:524px;top:386px;height:25px;line-height:25px;">同客</div>
<div class="a cbx on" style="left:552px;top:389px;"></div>
<svg class="a" style="left:552px;top:389px" width="13" height="13" viewBox="0 0 13 13"><path d="M2.3 6.9 L5.4 9.8 L10.8 2.8" fill="none" stroke="#fff" stroke-width="2"/></svg>
<div class="a ct" style="left:565px;top:386px;height:25px;line-height:25px;">意甲</div>
<div class="a cbx on" style="left:589px;top:389px;"></div>
<svg class="a" style="left:589px;top:389px" width="13" height="13" viewBox="0 0 13 13"><path d="M2.3 6.9 L5.4 9.8 L10.8 2.8" fill="none" stroke="#fff" stroke-width="2"/></svg>
<div class="a ct" style="left:602px;top:386px;height:25px;line-height:25px;">球会友谊</div>
<div class="a" style="left:0px;top:408px;width:1028px;height:39px;background:#dce3ec;"></div>
<div class="a" style="left:0px;top:447px;width:81px;height:26px;background:#0084ff;"></div>
<div class="a" style="left:81px;top:447px;width:384px;height:26px;background:#fff;"></div>
<div class="a" style="left:465px;top:447px;width:200px;height:26px;background:#fdf9f6;"></div>
<div class="a" style="left:665px;top:447px;width:216px;height:26px;background:#eef6fb;"></div>
<div class="a" style="left:881px;top:447px;width:146px;height:26px;background:#fff;"></div>
<div class="a" style="left:0px;top:473px;width:81px;height:26px;background:#0084ff;"></div>
<div class="a" style="left:81px;top:473px;width:384px;height:26px;background:#f0f0f0;"></div>
<div class="a" style="left:465px;top:473px;width:200px;height:26px;background:#fdf9f6;"></div>
<div class="a" style="left:665px;top:473px;width:216px;height:26px;background:#eef6fb;"></div>
<div class="a" style="left:881px;top:473px;width:146px;height:26px;background:#f0f0f0;"></div>
<div class="a" style="left:0px;top:499px;width:81px;height:26px;background:#0084ff;"></div>
<div class="a" style="left:81px;top:499px;width:384px;height:26px;background:#fff;"></div>
<div class="a" style="left:465px;top:499px;width:200px;height:26px;background:#fdf9f6;"></div>
<div class="a" style="left:665px;top:499px;width:216px;height:26px;background:#eef6fb;"></div>
<div class="a" style="left:881px;top:499px;width:146px;height:26px;background:#fff;"></div>
<div class="a" style="left:0px;top:525px;width:81px;height:26px;background:#0084ff;"></div>
<div class="a" style="left:81px;top:525px;width:384px;height:26px;background:#f0f0f0;"></div>
<div class="a" style="left:465px;top:525px;width:200px;height:26px;background:#fdf9f6;"></div>
<div class="a" style="left:665px;top:525px;width:216px;height:26px;background:#eef6fb;"></div>
<div class="a" style="left:881px;top:525px;width:146px;height:26px;background:#f0f0f0;"></div>
<div class="a" style="left:0px;top:551px;width:81px;height:26px;background:#0084ff;"></div>
<div class="a" style="left:81px;top:551px;width:384px;height:26px;background:#fff;"></div>
<div class="a" style="left:465px;top:551px;width:200px;height:26px;background:#fdf9f6;"></div>
<div class="a" style="left:665px;top:551px;width:216px;height:26px;background:#eef6fb;"></div>
<div class="a" style="left:881px;top:551px;width:146px;height:26px;background:#fff;"></div>
<div class="a" style="left:0px;top:577px;width:81px;height:26px;background:#10a6a0;"></div>
<div class="a" style="left:81px;top:577px;width:384px;height:26px;background:#f0f0f0;"></div>
<div class="a" style="left:465px;top:577px;width:200px;height:26px;background:#fdf9f6;"></div>
<div class="a" style="left:665px;top:577px;width:216px;height:26px;background:#eef6fb;"></div>
<div class="a" style="left:881px;top:577px;width:146px;height:26px;background:#f0f0f0;"></div>
<div class="a" style="left:0px;top:603px;width:81px;height:26px;background:#0084ff;"></div>
<div class="a" style="left:81px;top:603px;width:384px;height:26px;background:#fff;"></div>
<div class="a" style="left:465px;top:603px;width:200px;height:26px;background:#fdf9f6;"></div>
<div class="a" style="left:665px;top:603px;width:216px;height:26px;background:#eef6fb;"></div>
<div class="a" style="left:881px;top:603px;width:146px;height:26px;background:#fff;"></div>
<div class="a" style="left:0px;top:629px;width:81px;height:26px;background:#0084ff;"></div>
<div class="a" style="left:81px;top:629px;width:384px;height:26px;background:#f0f0f0;"></div>
<div class="a" style="left:465px;top:629px;width:200px;height:26px;background:#fdf9f6;"></div>
<div class="a" style="left:665px;top:629px;width:216px;height:26px;background:#eef6fb;"></div>
<div class="a" style="left:881px;top:629px;width:146px;height:26px;background:#f0f0f0;"></div>
<div class="a" style="left:0px;top:655px;width:81px;height:26px;background:#0084ff;"></div>
<div class="a" style="left:81px;top:655px;width:384px;height:26px;background:#fff;"></div>
<div class="a" style="left:465px;top:655px;width:200px;height:26px;background:#fdf9f6;"></div>
<div class="a" style="left:665px;top:655px;width:216px;height:26px;background:#eef6fb;"></div>
<div class="a" style="left:881px;top:655px;width:146px;height:26px;background:#fff;"></div>
<div class="a" style="left:0px;top:681px;width:81px;height:26px;background:#0084ff;"></div>
<div class="a" style="left:81px;top:681px;width:384px;height:26px;background:#f0f0f0;"></div>
<div class="a" style="left:465px;top:681px;width:200px;height:26px;background:#fdf9f6;"></div>
<div class="a" style="left:665px;top:681px;width:216px;height:26px;background:#eef6fb;"></div>
<div class="a" style="left:881px;top:681px;width:146px;height:26px;background:#f0f0f0;"></div>
<div class="a" style="left:0px;top:707px;width:1028px;height:26px;background:#fff;"></div>
<div class="a" style="left:0px;top:408px;width:1028px;height:1px;background:#c0c0c0;"></div>
<div class="a" style="left:465px;top:428px;width:562px;height:1px;background:#c0c0c0;"></div>
<div class="a" style="left:0px;top:447px;width:1028px;height:1px;background:#c0c0c0;"></div>
<div class="a" style="left:0px;top:473px;width:1028px;height:1px;background:#c0c0c0;"></div>
<div class="a" style="left:0px;top:499px;width:1028px;height:1px;background:#c0c0c0;"></div>
<div class="a" style="left:0px;top:525px;width:1028px;height:1px;background:#c0c0c0;"></div>
<div class="a" style="left:0px;top:551px;width:1028px;height:1px;background:#c0c0c0;"></div>
<div class="a" style="left:0px;top:577px;width:1028px;height:1px;background:#c0c0c0;"></div>
<div class="a" style="left:0px;top:603px;width:1028px;height:1px;background:#c0c0c0;"></div>
<div class="a" style="left:0px;top:629px;width:1028px;height:1px;background:#c0c0c0;"></div>
<div class="a" style="left:0px;top:655px;width:1028px;height:1px;background:#c0c0c0;"></div>
<div class="a" style="left:0px;top:681px;width:1028px;height:1px;background:#c0c0c0;"></div>
<div class="a" style="left:0px;top:707px;width:1028px;height:1px;background:#c0c0c0;"></div>
<div class="a" style="left:0px;top:733px;width:1028px;height:1px;background:#c0c0c0;"></div>
<div class="a" style="left:0px;top:408px;width:1px;height:326px;background:#c0c0c0;"></div>
<div class="a" style="left:81px;top:408px;width:1px;height:300px;background:#c0c0c0;"></div>
<div class="a" style="left:164px;top:408px;width:1px;height:300px;background:#c0c0c0;"></div>
<div class="a" style="left:245px;top:408px;width:1px;height:300px;background:#c0c0c0;"></div>
<div class="a" style="left:343px;top:408px;width:1px;height:300px;background:#c0c0c0;"></div>
<div class="a" style="left:384px;top:408px;width:1px;height:300px;background:#c0c0c0;"></div>
<div class="a" style="left:465px;top:408px;width:1px;height:300px;background:#c0c0c0;"></div>
<div class="a" style="left:518px;top:428px;width:1px;height:280px;background:#c0c0c0;"></div>
<div class="a" style="left:609px;top:428px;width:1px;height:280px;background:#c0c0c0;"></div>
<div class="a" style="left:665px;top:408px;width:1px;height:300px;background:#c0c0c0;"></div>
<div class="a" style="left:731px;top:428px;width:1px;height:280px;background:#c0c0c0;"></div>
<div class="a" style="left:797px;top:428px;width:1px;height:280px;background:#c0c0c0;"></div>
<div class="a" style="left:881px;top:408px;width:1px;height:300px;background:#c0c0c0;"></div>
<div class="a" style="left:922px;top:428px;width:1px;height:280px;background:#c0c0c0;"></div>
<div class="a" style="left:964px;top:428px;width:1px;height:280px;background:#c0c0c0;"></div>
<div class="a" style="left:1027px;top:408px;width:1px;height:326px;background:#c0c0c0;"></div>
<div class="a" style="left:1px;top:473px;width:80px;height:1px;background:#86c6ff;"></div>
<div class="a" style="left:1px;top:499px;width:80px;height:1px;background:#86c6ff;"></div>
<div class="a" style="left:1px;top:525px;width:80px;height:1px;background:#86c6ff;"></div>
<div class="a" style="left:1px;top:551px;width:80px;height:1px;background:#86c6ff;"></div>
<div class="a" style="left:1px;top:577px;width:80px;height:1px;background:#86c6ff;"></div>
<div class="a" style="left:1px;top:603px;width:80px;height:1px;background:#86c6ff;"></div>
<div class="a" style="left:1px;top:629px;width:80px;height:1px;background:#86c6ff;"></div>
<div class="a" style="left:1px;top:655px;width:80px;height:1px;background:#86c6ff;"></div>
<div class="a" style="left:1px;top:681px;width:80px;height:1px;background:#86c6ff;"></div>
<div class="a" style="left:81px;top:448px;width:1px;height:25px;background:#d9ecff;"></div>
<div class="a" style="left:81px;top:474px;width:1px;height:25px;background:#d9ecff;"></div>
<div class="a" style="left:81px;top:500px;width:1px;height:25px;background:#d9ecff;"></div>
<div class="a" style="left:81px;top:526px;width:1px;height:25px;background:#d9ecff;"></div>
<div class="a" style="left:81px;top:552px;width:1px;height:25px;background:#d9ecff;"></div>
<div class="a" style="left:81px;top:578px;width:1px;height:25px;background:#d9ecff;"></div>
<div class="a" style="left:81px;top:604px;width:1px;height:25px;background:#d9ecff;"></div>
<div class="a" style="left:81px;top:630px;width:1px;height:25px;background:#d9ecff;"></div>
<div class="a" style="left:81px;top:656px;width:1px;height:25px;background:#d9ecff;"></div>
<div class="a" style="left:81px;top:682px;width:1px;height:25px;background:#d9ecff;"></div>
<div class="a t" style="left:0px;top:409px;width:81px;height:39px;line-height:39px;color:#222">类型</div>
<div class="a t" style="left:81px;top:409px;width:83px;height:39px;line-height:39px;color:#222">日期</div>
<div class="a t" style="left:164px;top:409px;width:81px;height:39px;line-height:39px;color:#222">主场</div>
<div class="a t" style="left:245px;top:409px;width:98px;height:39px;line-height:39px;color:#222">比分(半场)</div>
<div class="a t" style="left:343px;top:409px;width:41px;height:39px;line-height:39px;color:#222">角球</div>
<div class="a t" style="left:384px;top:409px;width:81px;height:39px;line-height:39px;color:#222">客场</div>
<div class="a t" style="left:465px;top:430px;width:53px;height:19px;line-height:19px;color:#222">主</div>
<div class="a t" style="left:518px;top:430px;width:91px;height:19px;line-height:19px;color:#222">让球</div>
<div class="a t" style="left:609px;top:430px;width:56px;height:19px;line-height:19px;color:#222">客</div>
<div class="a t" style="left:665px;top:430px;width:66px;height:19px;line-height:19px;color:#222">主</div>
<div class="a t" style="left:731px;top:430px;width:66px;height:19px;line-height:19px;color:#222">和</div>
<div class="a t" style="left:797px;top:430px;width:84px;height:19px;line-height:19px;color:#222">客</div>
<div class="a t" style="left:881px;top:430px;width:41px;height:19px;line-height:19px;color:#222">胜负</div>
<div class="a t" style="left:922px;top:430px;width:42px;height:19px;line-height:19px;color:#222">让球</div>
<div class="a t" style="left:964px;top:430px;width:63px;height:19px;line-height:19px;color:#222">进球数</div>
<div class="a sel" style="left:505px;top:409px;width:59px;height:17px;"></div>
<div class="a st" style="left:510px;top:409px;height:19px;line-height:19px;">Crow*</div>
<svg class="a" style="left:551px;top:415px" width="11" height="8" viewBox="0 0 11 8"><path d="M1 1.5 L5.5 5.5 L10 1.5" fill="none" stroke="#111" stroke-width="2"/></svg>
<div class="a sel" style="left:574px;top:409px;width:49px;height:17px;"></div>
<div class="a st" style="left:579px;top:409px;height:19px;line-height:19px;">终指</div>
<svg class="a" style="left:610px;top:415px" width="11" height="8" viewBox="0 0 11 8"><path d="M1 1.5 L5.5 5.5 L10 1.5" fill="none" stroke="#111" stroke-width="2"/></svg>
<div class="a sel" style="left:709px;top:409px;width:68px;height:17px;"></div>
<div class="a st" style="left:714px;top:409px;height:19px;line-height:19px;">平均值</div>
<svg class="a" style="left:764px;top:415px" width="11" height="8" viewBox="0 0 11 8"><path d="M1 1.5 L5.5 5.5 L10 1.5" fill="none" stroke="#111" stroke-width="2"/></svg>
<div class="a sel" style="left:786px;top:409px;width:49px;height:17px;"></div>
<div class="a st" style="left:791px;top:409px;height:19px;line-height:19px;">终指</div>
<svg class="a" style="left:822px;top:415px" width="11" height="8" viewBox="0 0 11 8"><path d="M1 1.5 L5.5 5.5 L10 1.5" fill="none" stroke="#111" stroke-width="2"/></svg>
<div class="a sel" style="left:929px;top:409px;width:49px;height:17px;"></div>
<div class="a st" style="left:934px;top:409px;height:19px;line-height:19px;">全场</div>
<svg class="a" style="left:965px;top:415px" width="11" height="8" viewBox="0 0 11 8"><path d="M1 1.5 L5.5 5.5 L10 1.5" fill="none" stroke="#111" stroke-width="2"/></svg>
<div class="a t" style="left:1px;top:449px;width:80px;height:25px;line-height:25px;color:#fff">意甲</div>
<div class="a t" style="left:82px;top:449px;width:82px;height:25px;line-height:25px;color:#222">25-04-27</div>
<div class="a t" style="left:165px;top:449px;width:80px;height:25px;line-height:25px;color:#222"><span style="color:#137313">威尼斯</span></div>
<div class="a t" style="left:246px;top:449px;width:97px;height:25px;line-height:25px;color:#222"><span style="color:#d01515">0-2</span>(0-1)</div>
<div class="a t" style="left:344px;top:449px;width:40px;height:25px;line-height:25px;color:#222">7-2</div>
<div class="a t" style="left:385px;top:449px;width:80px;height:25px;line-height:25px;color:#222">AC米兰</div>
<div class="a t" style="left:466px;top:449px;width:52px;height:25px;line-height:25px;color:#222">0.87</div>
<div class="a t" style="left:519px;top:449px;width:90px;height:25px;line-height:25px;color:#222">受一球</div>
<div class="a t" style="left:610px;top:449px;width:55px;height:25px;line-height:25px;color:#222">1.02</div>
<div class="a t" style="left:666px;top:449px;width:65px;height:25px;line-height:25px;color:#222">4.86</div>
<div class="a t" style="left:732px;top:449px;width:65px;height:25px;line-height:25px;color:#222">4.07</div>
<div class="a t" style="left:798px;top:449px;width:83px;height:25px;line-height:25px;color:#222">1.66</div>
<div class="a t" style="left:882px;top:449px;width:40px;height:25px;line-height:25px;color:#222"><span style="color:#12129a">负</span></div>
<div class="a t" style="left:923px;top:449px;width:41px;height:25px;line-height:25px;color:#222"><span style="color:#12129a">输</span></div>
<div class="a t" style="left:965px;top:449px;width:62px;height:25px;line-height:25px;color:#222"><span style="color:#12129a">小</span></div>
<div class="a t" style="left:1px;top:475px;width:80px;height:25px;line-height:25px;color:#fff">意甲</div>
<div class="a t" style="left:82px;top:475px;width:82px;height:25px;line-height:25px;color:#222">25-04-20</div>
<div class="a t" style="left:165px;top:475px;width:80px;height:25px;line-height:25px;color:#222">恩波利</div>
<div class="a t" style="left:246px;top:475px;width:97px;height:25px;line-height:25px;color:#222"><span style="color:#d01515">2-2</span>(0-0)</div>
<div class="a t" style="left:344px;top:475px;width:40px;height:25px;line-height:25px;color:#222">2-5</div>
<div class="a t" style="left:385px;top:475px;width:80px;height:25px;line-height:25px;color:#222"><span style="color:#137313">威尼斯</span></div>
<div class="a t" style="left:466px;top:475px;width:52px;height:25px;line-height:25px;color:#222">0.95</div>
<div class="a t" style="left:519px;top:475px;width:90px;height:25px;line-height:25px;color:#222">平/半</div>
<div class="a t" style="left:610px;top:475px;width:55px;height:25px;line-height:25px;color:#222">0.94</div>
<div class="a t" style="left:666px;top:475px;width:65px;height:25px;line-height:25px;color:#222">2.30</div>
<div class="a t" style="left:732px;top:475px;width:65px;height:25px;line-height:25px;color:#222">2.97</div>
<div class="a t" style="left:798px;top:475px;width:83px;height:25px;line-height:25px;color:#222">3.53</div>
<div class="a t" style="left:882px;top:475px;width:40px;height:25px;line-height:25px;color:#222"><span style="color:#137313">平</span></div>
<div class="a t" style="left:923px;top:475px;width:41px;height:25px;line-height:25px;color:#222"><span style="color:#d01515">赢</span></div>
<div class="a t" style="left:965px;top:475px;width:62px;height:25px;line-height:25px;color:#222"><span style="color:#d01515">大</span></div>
<div class="a t" style="left:1px;top:501px;width:80px;height:25px;line-height:25px;color:#fff">意甲</div>
<div class="a t" style="left:82px;top:501px;width:82px;height:25px;line-height:25px;color:#222">25-04-12</div>
<div class="a t" style="left:165px;top:501px;width:80px;height:25px;line-height:25px;color:#222"><span class="rf">1</span><span style="color:#137313">威尼斯</span></div>
<div class="a t" style="left:246px;top:501px;width:97px;height:25px;line-height:25px;color:#222"><span style="color:#d01515">1-0</span>(0-0)</div>
<div class="a t" style="left:344px;top:501px;width:40px;height:25px;line-height:25px;color:#222">3-4</div>
<div class="a t" style="left:385px;top:501px;width:80px;height:25px;line-height:25px;color:#222">蒙扎</div>
<div class="a t" style="left:466px;top:501px;width:52px;height:25px;line-height:25px;color:#222">1.05</div>
<div class="a t" style="left:519px;top:501px;width:90px;height:25px;line-height:25px;color:#222">半/一</div>
<div class="a t" style="left:610px;top:501px;width:55px;height:25px;line-height:25px;color:#222">0.84</div>
<div class="a t" style="left:666px;top:501px;width:65px;height:25px;line-height:25px;color:#222">1.77</div>
<div class="a t" style="left:732px;top:501px;width:65px;height:25px;line-height:25px;color:#222">3.59</div>
<div class="a t" style="left:798px;top:501px;width:83px;height:25px;line-height:25px;color:#222">4.71</div>
<div class="a t" style="left:882px;top:501px;width:40px;height:25px;line-height:25px;color:#222"><span style="color:#d01515">胜</span></div>
<div class="a t" style="left:923px;top:501px;width:41px;height:25px;line-height:25px;color:#222"><span style="color:#d01515">赢</span></div>
<div class="a t" style="left:965px;top:501px;width:62px;height:25px;line-height:25px;color:#222"><span style="color:#12129a">小</span></div>
<div class="a t" style="left:1px;top:527px;width:80px;height:25px;line-height:25px;color:#fff">意甲</div>
<div class="a t" style="left:82px;top:527px;width:82px;height:25px;line-height:25px;color:#222">25-04-06</div>
<div class="a t" style="left:165px;top:527px;width:80px;height:25px;line-height:25px;color:#222">莱切</div>
<div class="a t" style="left:246px;top:527px;width:97px;height:25px;line-height:25px;color:#222"><span style="color:#d01515">1-1</span>(0-0)</div>
<div class="a t" style="left:344px;top:527px;width:40px;height:25px;line-height:25px;color:#222">8-3</div>
<div class="a t" style="left:385px;top:527px;width:80px;height:25px;line-height:25px;color:#222"><span style="color:#137313">威尼斯</span></div>
<div class="a t" style="left:466px;top:527px;width:52px;height:25px;line-height:25px;color:#222">1.03</div>
<div class="a t" style="left:519px;top:527px;width:90px;height:25px;line-height:25px;color:#222">平/半</div>
<div class="a t" style="left:610px;top:527px;width:55px;height:25px;line-height:25px;color:#222">0.86</div>
<div class="a t" style="left:666px;top:527px;width:65px;height:25px;line-height:25px;color:#222">2.36</div>
<div class="a t" style="left:732px;top:527px;width:65px;height:25px;line-height:25px;color:#222">3.02</div>
<div class="a t" style="left:798px;top:527px;width:83px;height:25px;line-height:25px;color:#222">3.34</div>
<div class="a t" style="left:882px;top:527px;width:40px;height:25px;line-height:25px;color:#222"><span style="color:#137313">平</span></div>
<div class="a t" style="left:923px;top:527px;width:41px;height:25px;line-height:25px;color:#222"><span style="color:#d01515">赢</span></div>
<div class="a t" style="left:965px;top:527px;width:62px;height:25px;line-height:25px;color:#222"><span style="color:#137313">走</span></div>
<div class="a t" style="left:1px;top:553px;width:80px;height:25px;line-height:25px;color:#fff">意甲</div>
<div class="a t" style="left:82px;top:553px;width:82px;height:25px;line-height:25px;color:#222">25-03-29</div>
<div class="a t" style="left:165px;top:553px;width:80px;height:25px;line-height:25px;color:#222"><span style="color:#137313">威尼斯</span></div>
<div class="a t" style="left:246px;top:553px;width:97px;height:25px;line-height:25px;color:#222"><span style="color:#d01515">0-1</span>(0-0)</div>
<div class="a t" style="left:344px;top:553px;width:40px;height:25px;line-height:25px;color:#222">2-3</div>
<div class="a t" style="left:385px;top:553px;width:80px;height:25px;line-height:25px;color:#222">博洛尼亚</div>
<div class="a t" style="left:466px;top:553px;width:52px;height:25px;line-height:25px;color:#222">0.82</div>
<div class="a t" style="left:519px;top:553px;width:90px;height:25px;line-height:25px;color:#222">受半/一</div>
<div class="a t" style="left:610px;top:553px;width:55px;height:25px;line-height:25px;color:#222">1.07</div>
<div class="a t" style="left:666px;top:553px;width:65px;height:25px;line-height:25px;color:#222">4.94</div>
<div class="a t" style="left:732px;top:553px;width:65px;height:25px;line-height:25px;color:#222">3.50</div>
<div class="a t" style="left:798px;top:553px;width:83px;height:25px;line-height:25px;color:#222">1.77</div>
<div class="a t" style="left:882px;top:553px;width:40px;height:25px;line-height:25px;color:#222"><span style="color:#12129a">负</span></div>
<div class="a t" style="left:923px;top:553px;width:41px;height:25px;line-height:25px;color:#222"><span style="color:#12129a">输</span></div>
<div class="a t" style="left:965px;top:553px;width:62px;height:25px;line-height:25px;color:#222"><span style="color:#12129a">小</span></div>
<div class="a t" style="left:1px;top:579px;width:80px;height:25px;line-height:25px;color:#fff">球会友谊</div>
<div class="a t" style="left:82px;top:579px;width:82px;height:25px;line-height:25px;color:#222">25-03-22</div>
<div class="a t" style="left:165px;top:579px;width:80px;height:25px;line-height:25px;color:#222">科佩尔</div>
<div class="a t" style="left:246px;top:579px;width:97px;height:25px;line-height:25px;color:#222"><span style="color:#d01515">4-2</span>(3-1)</div>
<div class="a t" style="left:344px;top:579px;width:40px;height:25px;line-height:25px;color:#222">0-0</div>
<div class="a t" style="left:385px;top:579px;width:80px;height:25px;line-height:25px;color:#222"><span style="color:#137313">威尼斯</span></div>
<div class="a t" style="left:666px;top:579px;width:65px;height:25px;line-height:25px;color:#222">6.96</div>
<div class="a t" style="left:732px;top:579px;width:65px;height:25px;line-height:25px;color:#222">4.56</div>
<div class="a t" style="left:798px;top:579px;width:83px;height:25px;line-height:25px;color:#222">1.41</div>
<div class="a t" style="left:882px;top:579px;width:40px;height:25px;line-height:25px;color:#222"><span style="color:#12129a">负</span></div>
<div class="a t" style="left:1px;top:605px;width:80px;height:25px;line-height:25px;color:#fff">意甲</div>
<div class="a t" style="left:82px;top:605px;width:82px;height:25px;line-height:25px;color:#222">25-03-16</div>
<div class="a t" style="left:165px;top:605px;width:80px;height:25px;line-height:25px;color:#222"><span style="color:#137313">威尼斯</span></div>
<div class="a t" style="left:246px;top:605px;width:97px;height:25px;line-height:25px;color:#222"><span style="color:#d01515">0-0</span>(0-0)</div>
<div class="a t" style="left:344px;top:605px;width:40px;height:25px;line-height:25px;color:#222">3-8</div>
<div class="a t" style="left:385px;top:605px;width:80px;height:25px;line-height:25px;color:#222">那不勒斯</div>
<div class="a t" style="left:466px;top:605px;width:52px;height:25px;line-height:25px;color:#222">1.09</div>
<div class="a t" style="left:519px;top:605px;width:90px;height:25px;line-height:25px;color:#222">受一球</div>
<div class="a t" style="left:610px;top:605px;width:55px;height:25px;line-height:25px;color:#222">0.80</div>
<div class="a t" style="left:666px;top:605px;width:65px;height:25px;line-height:25px;color:#222">7.42</div>
<div class="a t" style="left:732px;top:605px;width:65px;height:25px;line-height:25px;color:#222">4.17</div>
<div class="a t" style="left:798px;top:605px;width:83px;height:25px;line-height:25px;color:#222">1.47</div>
<div class="a t" style="left:882px;top:605px;width:40px;height:25px;line-height:25px;color:#222"><span style="color:#137313">平</span></div>
<div class="a t" style="left:923px;top:605px;width:41px;height:25px;line-height:25px;color:#222"><span style="color:#d01515">赢</span></div>
<div class="a t" style="left:965px;top:605px;width:62px;height:25px;line-height:25px;color:#222"><span style="color:#12129a">小</span></div>
<div class="a t" style="left:1px;top:631px;width:80px;height:25px;line-height:25px;color:#fff">意甲</div>
<div class="a t" style="left:82px;top:631px;width:82px;height:25px;line-height:25px;color:#222">25-03-08</div>
<div class="a t" style="left:165px;top:631px;width:80px;height:25px;line-height:25px;color:#222">科莫</div>
<div class="a t" style="left:246px;top:631px;width:97px;height:25px;line-height:25px;color:#222"><span style="color:#d01515">1-1</span>(0-0)</div>
<div class="a t" style="left:344px;top:631px;width:40px;height:25px;line-height:25px;color:#222">3-5</div>
<div class="a t" style="left:385px;top:631px;width:80px;height:25px;line-height:25px;color:#222"><span style="color:#137313">威尼斯</span></div>
<div class="a t" style="left:466px;top:631px;width:52px;height:25px;line-height:25px;color:#222">0.85</div>
<div class="a t" style="left:519px;top:631px;width:90px;height:25px;line-height:25px;color:#222">半/一</div>
<div class="a t" style="left:610px;top:631px;width:55px;height:25px;line-height:25px;color:#222">1.04</div>
<div class="a t" style="left:666px;top:631px;width:65px;height:25px;line-height:25px;color:#222">1.61</div>
<div class="a t" style="left:732px;top:631px;width:65px;height:25px;line-height:25px;color:#222">3.82</div>
<div class="a t" style="left:798px;top:631px;width:83px;height:25px;line-height:25px;color:#222">5.88</div>
<div class="a t" style="left:882px;top:631px;width:40px;height:25px;line-height:25px;color:#222"><span style="color:#137313">平</span></div>
<div class="a t" style="left:923px;top:631px;width:41px;height:25px;line-height:25px;color:#222"><span style="color:#d01515">赢</span></div>
<div class="a t" style="left:965px;top:631px;width:62px;height:25px;line-height:25px;color:#222"><span style="color:#12129a">小</span></div>
<div class="a t" style="left:1px;top:657px;width:80px;height:25px;line-height:25px;color:#fff">意甲</div>
<div class="a t" style="left:82px;top:657px;width:82px;height:25px;line-height:25px;color:#222">25-03-01</div>
<div class="a t" style="left:165px;top:657px;width:80px;height:25px;line-height:25px;color:#222">亚特兰大</div>
<div class="a t" style="left:246px;top:657px;width:97px;height:25px;line-height:25px;color:#222"><span style="color:#d01515">0-0</span>(0-0)</div>
<div class="a t" style="left:344px;top:657px;width:40px;height:25px;line-height:25px;color:#222">3-2</div>
<div class="a t" style="left:385px;top:657px;width:80px;height:25px;line-height:25px;color:#222"><span style="color:#137313">威尼斯</span></div>
<div class="a t" style="left:466px;top:657px;width:52px;height:25px;line-height:25px;color:#222">1.09</div>
<div class="a t" style="left:519px;top:657px;width:90px;height:25px;line-height:25px;color:#222">两球</div>
<div class="a t" style="left:610px;top:657px;width:55px;height:25px;line-height:25px;color:#222">0.80</div>
<div class="a t" style="left:666px;top:657px;width:65px;height:25px;line-height:25px;color:#222">1.20</div>
<div class="a t" style="left:732px;top:657px;width:65px;height:25px;line-height:25px;color:#222">6.79</div>
<div class="a t" style="left:798px;top:657px;width:83px;height:25px;line-height:25px;color:#222">13.14</div>
<div class="a t" style="left:882px;top:657px;width:40px;height:25px;line-height:25px;color:#222"><span style="color:#137313">平</span></div>
<div class="a t" style="left:923px;top:657px;width:41px;height:25px;line-height:25px;color:#222"><span style="color:#d01515">赢</span></div>
<div class="a t" style="left:965px;top:657px;width:62px;height:25px;line-height:25px;color:#222"><span style="color:#12129a">小</span></div>
<div class="a t" style="left:1px;top:683px;width:80px;height:25px;line-height:25px;color:#fff">意甲</div>
<div class="a t" style="left:82px;top:683px;width:82px;height:25px;line-height:25px;color:#222">25-02-22</div>
<div class="a t" style="left:165px;top:683px;width:80px;height:25px;line-height:25px;color:#222"><span style="color:#137313">威尼斯</span></div>
<div class="a t" style="left:246px;top:683px;width:97px;height:25px;line-height:25px;color:#222"><span style="color:#d01515">0-0</span>(0-0)</div>
<div class="a t" style="left:344px;top:683px;width:40px;height:25px;line-height:25px;color:#222">6-6</div>
<div class="a t" style="left:385px;top:683px;width:80px;height:25px;line-height:25px;color:#222">拉齐奥</div>
<div class="a t" style="left:466px;top:683px;width:52px;height:25px;line-height:25px;color:#222">0.84</div>
<div class="a t" style="left:519px;top:683px;width:90px;height:25px;line-height:25px;color:#222">受一球</div>
<div class="a t" style="left:610px;top:683px;width:55px;height:25px;line-height:25px;color:#222">1.05</div>
<div class="a t" style="left:666px;top:683px;width:65px;height:25px;line-height:25px;color:#222">5.24</div>
<div class="a t" style="left:732px;top:683px;width:65px;height:25px;line-height:25px;color:#222">4.00</div>
<div class="a t" style="left:798px;top:683px;width:83px;height:25px;line-height:25px;color:#222">1.63</div>
<div class="a t" style="left:882px;top:683px;width:40px;height:25px;line-height:25px;color:#222"><span style="color:#137313">平</span></div>
<div class="a t" style="left:923px;top:683px;width:41px;height:25px;line-height:25px;color:#222"><span style="color:#d01515">赢</span></div>
<div class="a t" style="left:965px;top:683px;width:62px;height:25px;line-height:25px;color:#222"><span style="color:#12129a">小</span></div>
<div class="a t" style="left:0px;top:709px;width:1027px;height:25px;line-height:25px;color:#222;letter-spacing:0.18px">近<span style="color:#d01515">10</span>场,胜1平6负3, 胜率:<span style="color:#d01515">10%</span> 让胜率:<span style="color:#d01515">77.8%</span> 大率:<span style="color:#d01515">11.1%</span> 单率:<span style="color:#d01515">20%</span></div>
</body></html>
